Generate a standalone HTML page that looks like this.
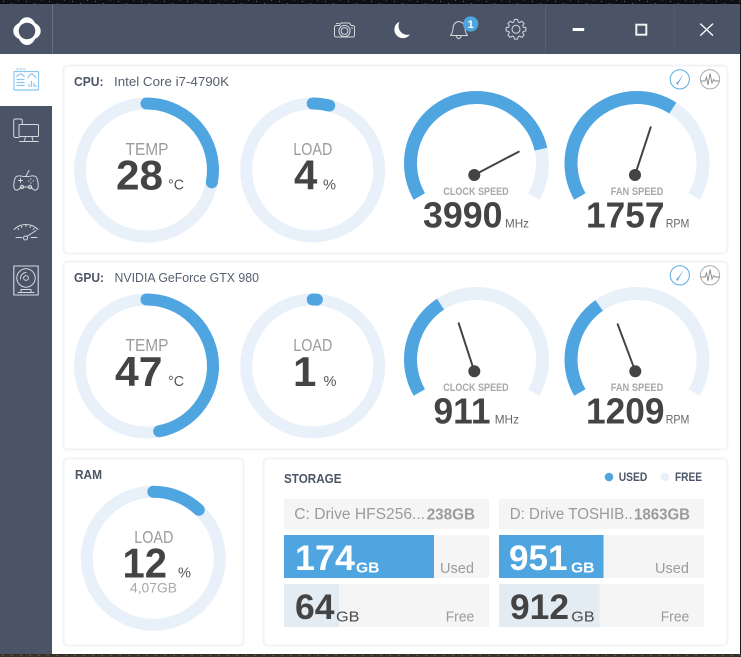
<!DOCTYPE html>
<html><head><meta charset="utf-8"><title>Monitor</title>
<style>
html,body{margin:0;padding:0;width:741px;height:657px;overflow:hidden;background:#111}
svg{display:block}
text{font-family:"Liberation Sans",sans-serif}
.b{font-weight:bold}
.h{fill:#4b5567}
.d{fill:#444}
.m{fill:#9b9b9b}
.l{fill:#a8a8a8}
.card{fill:#fff;stroke:#f2f3f4;stroke-width:2}
.ic{fill:none;stroke:#d5d8dd;stroke-width:1;stroke-linejoin:round;stroke-linecap:round}
.ia{fill:none;stroke:#8cc5ee;stroke-width:1.2;stroke-linejoin:round}
.tr{fill:none;stroke:#e8f1fa;stroke-width:12}
.va{fill:none;stroke:#4fa5e0;stroke-width:12;stroke-linecap:round}
.gt{fill:none;stroke:#e8f1fa;stroke-width:13}
.gv{fill:none;stroke:#4fa5e0;stroke-width:13}
.nd{stroke:#444;stroke-width:2;stroke-linecap:round}
</style></head><body>
<svg width="741" height="657" viewBox="0 0 741 657" xmlns="http://www.w3.org/2000/svg">
<defs>
<pattern id="st" width="23" height="4" patternUnits="userSpaceOnUse"><rect width="23" height="4" fill="#0e0e14"/><rect x="3" y="1" width="1" height="1" fill="#667"/><rect x="11" y="3" width="1" height="1" fill="#556"/><rect x="18" y="0" width="1" height="1" fill="#445"/></pattern>
<pattern id="br" width="9" height="3" patternUnits="userSpaceOnUse"><rect width="9" height="3" fill="#3a352c"/><rect x="2" y="1" width="2" height="1" fill="#5c5445"/><rect x="6" y="0" width="1" height="1" fill="#1f1c17"/></pattern>
</defs>
<rect width="741" height="4" fill="url(#st)"/>
<rect y="654" width="741" height="3" fill="url(#br)"/>
<rect x="740" y="4" width="1" height="650" fill="#1a1a1e"/>
<rect x="0" y="4" width="740" height="650" fill="#fff"/>
<rect x="0" y="4" width="740" height="50" fill="#4a5466"/>
<rect x="0" y="106" width="52" height="548" fill="#4a5466"/>
<rect x="52" y="4" width="1" height="50" fill="#667082"/>
<rect x="545" y="4" width="1" height="50" fill="#566072"/>
<rect x="674" y="4" width="1" height="50" fill="#505a6c"/>

<!-- logo -->
<path fill="#fff" d="M27 17.3C31 17.3 33.5 20 35 23C38 24.5 40.7 27 40.7 31C40.7 35 38 37.5 35 39C33.5 42 31 45 27 45C23 45 20.5 42 19 39C16 37.5 13.3 35 13.3 31C13.3 27 16 24.5 19 23C20.5 20 23 17.3 27 17.3Z"/>
<circle cx="27" cy="31" r="8.3" fill="#4a5466"/>

<!-- header icons -->
<g class="ic">
<path d="M334.5 27.5Q334.5 25.5 336.5 25.5H339.5L341 23H349.5L351 25.5H352.5Q354.5 25.5 354.5 27.5V35Q354.5 37 352.5 37H336.5Q334.5 37 334.5 35Z"/>
<circle cx="344.5" cy="31" r="5.6"/><circle cx="344.5" cy="31" r="3.4"/>
<path d="M336.5 23.5H339M351.5 28h1"/>
<path d="M458.7 21.5C454.5 22 453.2 25 453 28.5C452.8 32 452 33.5 450.5 35.5H467.5C466 33.5 465.2 32 465 28.5C464.8 25 463 22 458.7 21.5Z"/>
<path d="M456.5 36.5Q458.7 41 461 36.5"/>
<path transform="translate(516,29.3)" d="M9.88-1.56L9.88 1.56L7.27 2.22L6.71 3.57L8.09 5.88L5.88 8.09L3.57 6.71L2.22 7.27L1.56 9.88L-1.56 9.88L-2.22 7.27L-3.57 6.71L-5.88 8.09L-8.09 5.88L-6.71 3.57L-7.27 2.22L-9.88 1.56L-9.88-1.56L-7.27-2.22L-6.71-3.57L-8.09-5.88L-5.88-8.09L-3.57-6.71L-2.22-7.27L-1.56-9.88L1.56-9.88L2.22-7.27L3.57-6.71L5.88-8.09L8.09-5.88L6.71-3.57L7.27-2.22Z"/>
<circle cx="516" cy="29.3" r="4"/>
</g>
<path fill="#fff" d="M399.5 21.7A8.6 8.6 0 1 0 410 34.5A9 9 0 0 1 399.5 21.7Z"/>
<circle cx="470.7" cy="24" r="7.6" fill="#4fa5e0"/>
<text x="470.7" y="28" font-size="11" class="b" fill="#fff" text-anchor="middle">1</text>
<rect x="572.7" y="28" width="11.5" height="3" fill="#fff"/>
<rect x="636.3" y="24.7" width="10" height="10" fill="none" stroke="#eef0f2" stroke-width="2"/>
<path d="M700.3 23.6L713 35.6M713 23.6L700.3 35.6" stroke="#fff" stroke-width="1.3" fill="none"/>

<!-- sidebar icons -->
<g class="ia">
<rect x="14" y="71.5" width="24.5" height="18.5" rx="1"/>
<path d="M16 69h2.5M19.5 69h2.5M23 69h2.5" stroke-width="1"/>
<path d="M16.5 77Q20.5 71 24.5 77M28 78Q31 70 36 78"/>
<path d="M16.5 79.5h8M16.5 82.5h8M16.5 85.5h8"/>
<path d="M29 87v-3M31.5 87v-6M34 87v-4M36 87v-2"/>
</g>
<g class="ic">
<path d="M19 137.5H15.5Q13.7 137.5 13.7 135.5V121Q13.7 119 15.5 119H20.5Q22.3 119 22.3 121V124"/>
<rect x="19" y="124.5" width="19.5" height="12" rx="1"/>
<path d="M25.5 137L24.5 140.5M32 137L33 140.5M19.5 141.5H38.3"/>
<path d="M18 176C15 176 14 181 13.8 185C13.5 189 15.5 190.5 17.5 190C19.5 189.5 20 187.5 22 187H30C32 187.5 32.5 189.5 34.5 190C36.5 190.5 38.5 189 38.2 185C38 181 37 176 34 176C31 175.5 30 176.5 28 176.5H24C22 176.5 21 175.5 18 176Z"/>
<path d="M26 176L29 170.5M18.5 180.5h4M20.5 178.5v4M30.5 179h.6M33 181h.6M28.5 181h.6M30.5 183h.6"/>
<circle cx="22" cy="187" r="1.7"/><circle cx="30" cy="187" r="1.7"/>
<path d="M14 229.5A17 17 0 0 1 38 229.5"/>
<path d="M18 228.5l.8.9M21.5 226.2l.4 1.3M26 225.2v1.4M30.5 226.2l-.4 1.3M34 228.5l-.8.9" />
<path d="M16 237.5H22M31 237.5H37M27 236.3L36 230.5"/>
<circle cx="25.5" cy="238" r="2"/>
<rect x="13.8" y="266" width="24.4" height="29" stroke-width="1.1"/>
<circle cx="26" cy="278" r="9.2"/>
<circle cx="26" cy="278" r="2.4"/>
<path d="M20.5 279A6 6 0 0 1 26 272.5"/>
<path d="M21 292V289.5H31V292M18 292.5H34"/>
</g>

<!-- cards -->
<rect class="card" x="63.5" y="65.5" width="664" height="188" rx="4"/>
<rect class="card" x="63.5" y="261.5" width="664" height="188" rx="4"/>
<rect class="card" x="63.5" y="458.5" width="180" height="187" rx="4"/>
<rect class="card" x="263.5" y="458.5" width="464" height="187" rx="4"/>

<!-- titles -->
<text x="74" y="86" font-size="13" class="b h" textLength="29.5" lengthAdjust="spacingAndGlyphs">CPU:</text>
<text x="114" y="86" font-size="13" fill="#555f6e" textLength="115" lengthAdjust="spacingAndGlyphs">Intel Core i7-4790K</text>
<text x="74" y="282" font-size="13" class="b h" textLength="30" lengthAdjust="spacingAndGlyphs">GPU:</text>
<text x="114.5" y="282" font-size="13" fill="#555f6e" textLength="144.5" lengthAdjust="spacingAndGlyphs">NVIDIA GeForce GTX 980</text>

<!-- card corner icons -->
<g id="ci">
<circle cx="679.8" cy="79.3" r="9.6" fill="none" stroke="#5aaee4"/>
<path d="M683.6 74L678.8 82.6L677 85.3L676.4 82.5L678 81.8Z" fill="#4fa5e0"/>
<circle cx="710" cy="79.3" r="9.6" fill="none" stroke="#aaa"/>
<path d="M701 81H705L706.5 77L708 85L710 73.5L712 83L713.5 79.5L715 81H719" fill="none" stroke="#888" stroke-width=".9"/>
</g>
<circle cx="679.8" cy="275.3" r="9.6" fill="none" stroke="#5aaee4"/>
<path d="M683.6 270L678.8 278.6L677 281.3L676.4 278.5L678 277.8Z" fill="#4fa5e0"/>
<circle cx="710" cy="275.3" r="9.6" fill="none" stroke="#aaa"/>
<path d="M701 277H705L706.5 273L708 281L710 269.5L712 279L713.5 275.5L715 277H719" fill="none" stroke="#888" stroke-width=".9"/>

<!-- rings -->
<g>
<circle class="tr" cx="146.5" cy="170" r="66.5"/>
<circle class="va" cx="146.5" cy="170" r="66.5" pathLength="100" stroke-dasharray="28 200" transform="rotate(-90 146.5 170)"/>
<circle class="tr" cx="312.7" cy="170" r="66.5"/>
<circle class="va" cx="312.7" cy="170" r="66.5" pathLength="100" stroke-dasharray="4 200" transform="rotate(-90 312.7 170)"/>
<circle class="tr" cx="146.5" cy="366" r="66.5"/>
<circle class="va" cx="146.5" cy="366" r="66.5" pathLength="100" stroke-dasharray="47 200" transform="rotate(-90 146.5 366)"/>
<circle class="tr" cx="312.7" cy="366" r="66.5"/>
<circle class="va" cx="312.7" cy="366" r="66.5" pathLength="100" stroke-dasharray="1 200" transform="rotate(-90 312.7 366)"/>
<circle class="tr" cx="153.3" cy="558.3" r="66.5"/>
<circle class="va" cx="153.3" cy="558.3" r="66.5" pathLength="100" stroke-dasharray="12 200" transform="rotate(-90 153.3 558.3)"/>
</g>

<!-- ring text -->
<text x="125.5" y="155" font-size="17.5" class="m" textLength="43" lengthAdjust="spacingAndGlyphs">TEMP</text>
<text x="116" y="189.5" font-size="42" class="b d" textLength="47" lengthAdjust="spacingAndGlyphs">28</text>
<text x="168" y="189.5" font-size="14.5" fill="#555" textLength="16" lengthAdjust="spacingAndGlyphs">°C</text>
<text x="293.3" y="155" font-size="17.5" class="m" textLength="39" lengthAdjust="spacingAndGlyphs">LOAD</text>
<text x="294" y="189.5" font-size="42" class="b d">4</text>
<text x="323" y="189.5" font-size="14.5" fill="#555" textLength="13" lengthAdjust="spacingAndGlyphs">%</text>

<text x="125.5" y="351" font-size="17.5" class="m" textLength="43" lengthAdjust="spacingAndGlyphs">TEMP</text>
<text x="115" y="386" font-size="42" class="b d" textLength="47.5" lengthAdjust="spacingAndGlyphs">47</text>
<text x="168" y="386" font-size="14.5" fill="#555" textLength="16" lengthAdjust="spacingAndGlyphs">°C</text>
<text x="293.3" y="351" font-size="17.5" class="m" textLength="39" lengthAdjust="spacingAndGlyphs">LOAD</text>
<text x="293" y="386" font-size="42" class="b d">1</text>
<text x="323.5" y="386" font-size="14.5" fill="#555" textLength="13" lengthAdjust="spacingAndGlyphs">%</text>

<!-- gauges -->
<path class="gt" d="M419.34 196.5A66 66 0 1 1 533.66 196.5" transform="translate(0,0)"/>
<path class="gv" d="M419.34 196.5A66 66 0 1 1 533.66 196.5" pathLength="240" stroke-dasharray="197.6 300"/>
<path class="gt" d="M579.84 196.5A66 66 0 1 1 694.16 196.5"/>
<path class="gv" d="M579.84 196.5A66 66 0 1 1 694.16 196.5" pathLength="240" stroke-dasharray="153 300"/>
<path class="gt" d="M419.34 392.5A66 66 0 1 1 533.66 392.5"/>
<path class="gv" d="M419.34 392.5A66 66 0 1 1 533.66 392.5" pathLength="240" stroke-dasharray="87 300"/>
<path class="gt" d="M579.84 392.5A66 66 0 1 1 694.16 392.5"/>
<path class="gv" d="M579.84 392.5A66 66 0 1 1 694.16 392.5" pathLength="240" stroke-dasharray="85 300"/>

<line class="nd" x1="474.3" y1="175" x2="518.7" y2="151.7"/><circle cx="474.3" cy="175" r="6" fill="#444"/>
<line class="nd" x1="635" y1="175" x2="650.7" y2="127.3"/><circle cx="635" cy="175" r="6" fill="#444"/>
<line class="nd" x1="474.3" y1="371.3" x2="458.7" y2="323.3"/><circle cx="474.3" cy="371.3" r="6" fill="#444"/>
<line class="nd" x1="635.3" y1="371.3" x2="617.7" y2="324.3"/><circle cx="635.3" cy="371.3" r="6" fill="#444"/>

<text x="443.3" y="195" font-size="11" class="b l" textLength="65.4" lengthAdjust="spacingAndGlyphs">CLOCK SPEED</text>
<text x="610.7" y="195" font-size="11" class="b l" textLength="52.6" lengthAdjust="spacingAndGlyphs">FAN SPEED</text>
<text x="423" y="227.3" font-size="36" class="b d" textLength="79.5" lengthAdjust="spacingAndGlyphs">3990</text>
<text x="505" y="227.3" font-size="12" fill="#666" textLength="24" lengthAdjust="spacingAndGlyphs">MHz</text>
<text x="586" y="227.3" font-size="36" class="b d" textLength="78.5" lengthAdjust="spacingAndGlyphs">1757</text>
<text x="665.7" y="227.3" font-size="12" fill="#666" textLength="23.6" lengthAdjust="spacingAndGlyphs">RPM</text>

<text x="443.3" y="391" font-size="11" class="b l" textLength="65.4" lengthAdjust="spacingAndGlyphs">CLOCK SPEED</text>
<text x="610.7" y="391" font-size="11" class="b l" textLength="52.6" lengthAdjust="spacingAndGlyphs">FAN SPEED</text>
<text x="433.5" y="423.3" font-size="36" class="b d" textLength="57" lengthAdjust="spacingAndGlyphs">911</text>
<text x="494.7" y="423.3" font-size="12" fill="#666" textLength="24.3" lengthAdjust="spacingAndGlyphs">MHz</text>
<text x="586" y="423.3" font-size="36" class="b d" textLength="78.5" lengthAdjust="spacingAndGlyphs">1209</text>
<text x="665.7" y="423.3" font-size="12" fill="#666" textLength="23.6" lengthAdjust="spacingAndGlyphs">RPM</text>

<!-- RAM -->
<text x="75" y="479" font-size="13" class="b h" textLength="27" lengthAdjust="spacingAndGlyphs">RAM</text>
<text x="134.3" y="543" font-size="17.5" class="m" textLength="39" lengthAdjust="spacingAndGlyphs">LOAD</text>
<text x="122.5" y="577.3" font-size="42" class="b d" textLength="44.5" lengthAdjust="spacingAndGlyphs">12</text>
<text x="178" y="577.3" font-size="14.5" fill="#555" textLength="13" lengthAdjust="spacingAndGlyphs">%</text>
<text x="130" y="592.7" font-size="14" class="l" textLength="47" lengthAdjust="spacingAndGlyphs">4,07GB</text>

<!-- Storage -->
<text x="284" y="483" font-size="13" class="b h" textLength="57.5" lengthAdjust="spacingAndGlyphs">STORAGE</text>
<circle cx="609" cy="477" r="4.3" fill="#4fa5e0"/>
<text x="618.7" y="481" font-size="11.5" class="b h" textLength="28.6" lengthAdjust="spacingAndGlyphs">USED</text>
<circle cx="665" cy="477" r="4.3" fill="#e8f1fa"/>
<text x="675" y="481" font-size="11.5" class="b h" textLength="27" lengthAdjust="spacingAndGlyphs">FREE</text>

<rect x="284" y="499" width="205" height="30" fill="#f5f5f5"/>
<rect x="499" y="499" width="205" height="30" fill="#f5f5f5"/>
<rect x="284" y="535" width="205" height="43" fill="#f5f5f5"/>
<rect x="499" y="535" width="205" height="43" fill="#f5f5f5"/>
<rect x="284" y="584" width="205" height="43" fill="#f5f5f5"/>
<rect x="499" y="584" width="205" height="43" fill="#f5f5f5"/>
<rect x="284" y="535" width="150" height="43" fill="#4fa5e0"/>
<rect x="499" y="535" width="104.5" height="43" fill="#4fa5e0"/>
<rect x="284" y="584" width="55" height="43" fill="#e3ebf3"/>
<rect x="499" y="584" width="100.5" height="43" fill="#e3ebf3"/>

<text x="294.3" y="519" font-size="15.5" class="m" textLength="130.7" lengthAdjust="spacingAndGlyphs">C: Drive HFS256...</text>
<text x="426.7" y="519.3" font-size="15.5" class="b m" textLength="48.3" lengthAdjust="spacingAndGlyphs">238GB</text>
<text x="509.7" y="519" font-size="15.5" class="m" textLength="123" lengthAdjust="spacingAndGlyphs">D: Drive TOSHIB..</text>
<text x="634" y="519.3" font-size="15.5" class="b m" textLength="56" lengthAdjust="spacingAndGlyphs">1863GB</text>

<text x="295" y="570" font-size="35" class="b" fill="#fff" textLength="60" lengthAdjust="spacingAndGlyphs">174</text>
<text x="356" y="572.3" font-size="15" class="b" fill="#fff" textLength="23.5" lengthAdjust="spacingAndGlyphs">GB</text>
<text x="440" y="573" font-size="15" class="m" textLength="34" lengthAdjust="spacingAndGlyphs">Used</text>
<text x="509" y="570" font-size="35" class="b" fill="#fff" textLength="58.5" lengthAdjust="spacingAndGlyphs">951</text>
<text x="571" y="572.3" font-size="15" class="b" fill="#fff" textLength="23.5" lengthAdjust="spacingAndGlyphs">GB</text>
<text x="655" y="573" font-size="15" class="m" textLength="34" lengthAdjust="spacingAndGlyphs">Used</text>

<text x="295" y="619" font-size="35" class="b d" textLength="39.5" lengthAdjust="spacingAndGlyphs">64</text>
<text x="336" y="621.7" font-size="15" fill="#4a4a4a" textLength="23.5" lengthAdjust="spacingAndGlyphs">GB</text>
<text x="445.7" y="621.7" font-size="15" class="m" textLength="28.6" lengthAdjust="spacingAndGlyphs">Free</text>
<text x="510" y="619" font-size="35" class="b d" textLength="59" lengthAdjust="spacingAndGlyphs">912</text>
<text x="571.3" y="621.7" font-size="15" fill="#4a4a4a" textLength="23.3" lengthAdjust="spacingAndGlyphs">GB</text>
<text x="660.7" y="621.7" font-size="15" class="m" textLength="28.6" lengthAdjust="spacingAndGlyphs">Free</text>
</svg>
</body></html>
